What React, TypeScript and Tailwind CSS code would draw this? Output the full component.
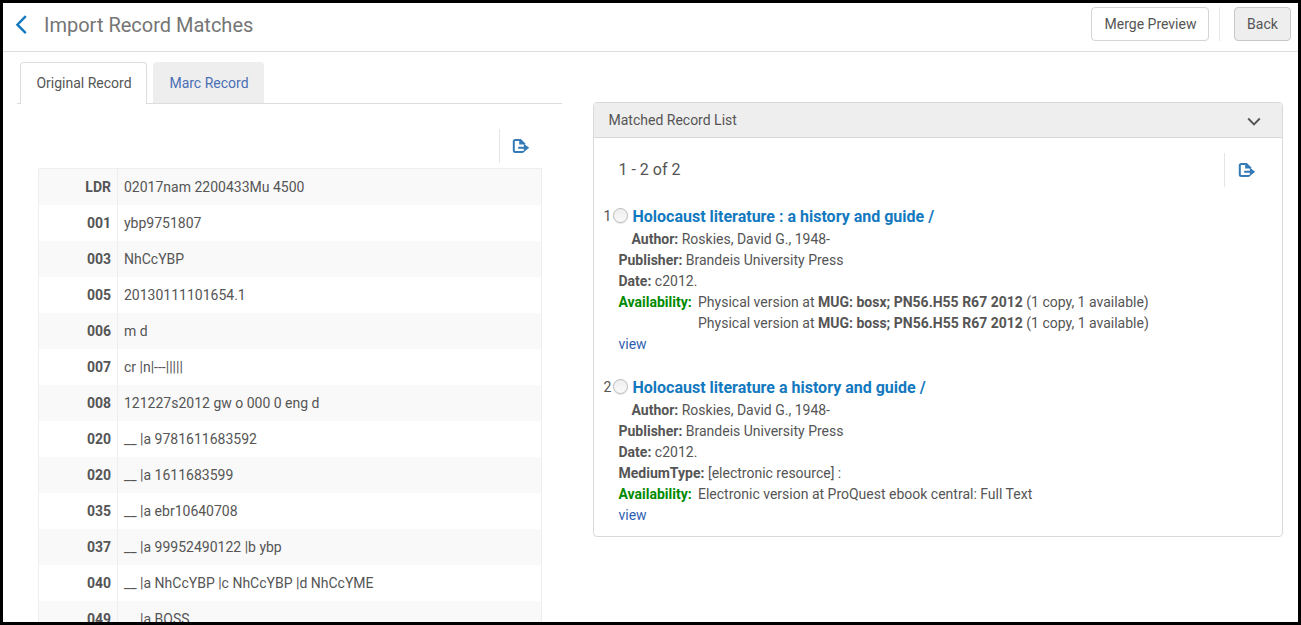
import clsx from 'clsx';
import type { ReactNode } from 'react';

interface MarcField {
  tag: string;
  value: string;
}

interface MatchedRecord {
  title: string;
  author: string;
  publisher: string;
  date: string;
  mediumType?: string;
  availability: ReactNode[];
}

const marcFields: MarcField[] = [
  { tag: 'LDR', value: '02017nam 2200433Mu 4500' },
  { tag: '001', value: 'ybp9751807' },
  { tag: '003', value: 'NhCcYBP' },
  { tag: '005', value: '20130111101654.1' },
  { tag: '006', value: 'm d' },
  { tag: '007', value: 'cr |n|---|||||' },
  { tag: '008', value: '121227s2012 gw o 000 0 eng d' },
  { tag: '020', value: '__ |a 9781611683592' },
  { tag: '020', value: '__ |a 1611683599' },
  { tag: '035', value: '__ |a ebr10640708' },
  { tag: '037', value: '__ |a 99952490122 |b ybp' },
  { tag: '040', value: '__ |a NhCcYBP |c NhCcYBP |d NhCcYME' },
  { tag: '049', value: '__ |a BOSS' },
];

const matchedRecords: MatchedRecord[] = [
  {
    title: 'Holocaust literature : a history and guide /',
    author: 'Roskies, David G., 1948-',
    publisher: 'Brandeis University Press',
    date: 'c2012.',
    availability: [
      <>
        Physical version at <b>MUG: bosx; PN56.H55 R67 2012</b> (1 copy, 1
        available)
      </>,
      <>
        Physical version at <b>MUG: boss; PN56.H55 R67 2012</b> (1 copy, 1
        available)
      </>,
    ],
  },
  {
    title: 'Holocaust literature a history and guide /',
    author: 'Roskies, David G., 1948-',
    publisher: 'Brandeis University Press',
    date: 'c2012.',
    mediumType: '[electronic resource] :',
    availability: ['Electronic version at ProQuest ebook central: Full Text'],
  },
];

const ExportIcon = () => (
  <svg width="18" height="16" viewBox="0 0 18 16" fill="none">
    <path
      d="M11.600 12.900c-.2.900-.7 1.200-1.500 1.200H3.300c-.9 0-1.500-.6-1.500-1.500V3.500c0-.9.6-1.500 1.500-1.500h4.400"
      stroke="#337ab7"
      strokeWidth="2"
    />
    <path d="M7.200 1h1.600l4.600 4.600v.8H7.200z" fill="#337ab7" />
    <path d="M6.200 8.800h5.600V5.700l5.400 4.100-5.400 4.100v-3.100H6.200z" fill="#337ab7" />
  </svg>
);

const ExportButton = () => (
  <button
    type="button"
    aria-label="Export"
    className="flex h-[34px] items-center border-l border-[#e5e5e5]"
  >
    <ExportIcon />
  </button>
);

const Field = ({
  label,
  value,
  className,
}: {
  label: string;
  value: string;
  className?: string;
}) => (
  <div className={className}>
    <b>{label}:</b> {value}
  </div>
);

const Header = () => (
  <header className="flex h-[49px] shrink-0 items-start border-b border-[#ddd] pt-1 pr-[7px] pl-3">
    <svg width="12" height="20" viewBox="0 0 12 20" className="mt-2" fill="none">
      <path d="M10.800 1.200 2.400 9.700l8.400 8.500" stroke="#1379bf" strokeWidth="2.400" />
    </svg>
    <h1 className="ml-[17px] text-xl leading-[36px] text-[#757575]">
      Import Record Matches
    </h1>
    <div className="ml-auto flex">
      <button
        type="button"
        className="h-[34px] w-[118px] rounded border border-[#d4d4d4] bg-white pl-px"
      >
        Merge Preview
      </button>
      <div className="mr-[14px] ml-[10px] h-[34px] w-px bg-[#e8e8e8]" />
      <button
        type="button"
        className="h-[34px] w-[57px] rounded border border-[#c8c8c8] bg-[#eee]"
      >
        Back
      </button>
    </div>
  </header>
);

const OriginalRecord = () => (
  <section className="ml-[14px] w-[545px] shrink-0 pt-[10px]">
    <div className="flex border-b border-[#ddd] pl-[3px]">
      <div className="-mb-px h-[42px] w-[127px] rounded-t border border-b-0 border-[#ddd] bg-white pl-px text-center leading-[41px]">
        Original Record
      </div>
      <div className="ml-[6px] h-[41px] w-[111px] rounded-t bg-[#eee] pl-px text-center leading-[43px] text-[#4a6fb5]">
        Marc Record
      </div>
    </div>
    <div className="mt-[25px] flex justify-end pr-8 [&_svg]:ml-3">
      <ExportButton />
    </div>
    <div className="mt-[5px] ml-[21px] w-[504px] border border-[#eee]">
      {marcFields.map((field, index) => (
        <div
          key={index}
          className={clsx(
            'flex h-9 leading-9',
            index % 2 === 0 ? 'bg-[#f9f9f9]' : 'bg-white',
          )}
        >
          <div className="w-[79px] border-r border-[#eee] pr-[6px] text-right font-bold">
            {field.tag}
          </div>
          <div className="pl-[6px] whitespace-pre">{field.value}</div>
        </div>
      ))}
    </div>
  </section>
);

const MatchedRecordItem = ({
  record,
  position,
}: {
  record: MatchedRecord;
  position: number;
}) => (
  <li className="leading-[21px]">
    <div className="flex h-6 items-center pl-[9.5px]">
      <span className="mb-[2px] w-[9.5px]">{position}</span>
      <input
        type="radio"
        name="match"
        aria-label={record.title}
        className="mb-1 size-[15px] appearance-none rounded-full border border-[#bbb] bg-linear-to-b from-[#eee] to-[#fafafa] shadow-[0_1px_1px_#e5e5e5]"
      />
      <a className="ml-[4.5px] text-base font-bold text-[#1379bf]">
        {record.title}
      </a>
    </div>
    <div className="pl-[24.5px]">
      <Field label="Author" value={record.author} className="pl-[13px]" />
      <Field label="Publisher" value={record.publisher} />
      <Field label="Date" value={record.date} />
      {record.mediumType && (
        <Field label="MediumType" value={record.mediumType} />
      )}
      <div className="flex">
        <b className="w-[79.5px] text-[#008a00]">Availability:</b>
        <div>
          {record.availability.map((line, index) => (
            <div key={index}>{line}</div>
          ))}
        </div>
      </div>
      <a className="text-[#2f5fb3]">view</a>
    </div>
  </li>
);

const MatchedRecordList = () => (
  <section className="mt-[50px] ml-[31px] h-[435px] w-[690px] rounded border border-[#d9d9d9]">
    <div className="flex h-[35px] items-center justify-between rounded-t-[3px] border-b border-[#d9d9d9] bg-[#eee] pr-[21px] pl-[14.5px]">
      <h2>Matched Record List</h2>
      <svg width="14" height="10" viewBox="0 0 14 10" className="mt-1" fill="none">
        <path d="m1.200 1.500 5.800 6 5.800-6" stroke="#555" strokeWidth="1.900" />
      </svg>
    </div>
    <div className="flex items-center justify-between pt-[15px] pr-[26px] pl-[24.5px] [&_svg]:ml-[13px]">
      <span className="text-base">1 - 2 of 2</span>
      <ExportButton />
    </div>
    <ul className="mt-[18px] space-y-[21px]">
      {matchedRecords.map((record, index) => (
        <MatchedRecordItem key={index} record={record} position={index + 1} />
      ))}
    </ul>
  </section>
);

const App = () => (
  <div className="flex h-[625px] w-[1301px] flex-col overflow-hidden border-[3px] border-black bg-white font-[Roboto,sans-serif] text-sm text-[#555]">
    <Header />
    <main className="flex min-h-0 flex-1 items-start">
      <OriginalRecord />
      <MatchedRecordList />
    </main>
  </div>
);

export default App;
